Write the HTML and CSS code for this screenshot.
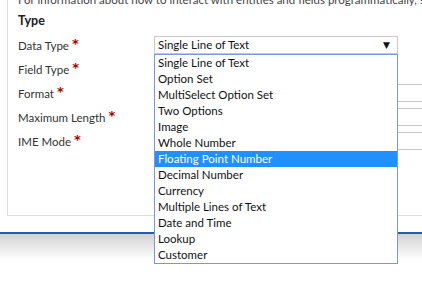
FILE: index.html
```html
<html lang="en">
<head>
    <meta charset="UTF-8">
    <title>Field properties</title>
    <link rel="stylesheet" href="styles.css">
</head>
<body>
    <div class="panel">
        <p class="intro">For information about how to interact with entities and fields programmatically, see</p>
        <h3>Type</h3>

        <div class="row">
            <label>Data Type <span class="req">*</span></label>
            <div class="field">
                <div class="select short">Single Line of Text<span class="arrow">&#9660;</span></div>
                <ul class="options">
                    <li>Single Line of Text</li>
                    <li>Option Set</li>
                    <li>MultiSelect Option Set</li>
                    <li>Two Options</li>
                    <li>Image</li>
                    <li>Whole Number</li>
                    <li class="selected">Floating Point Number</li>
                    <li>Decimal Number</li>
                    <li>Currency</li>
                    <li>Multiple Lines of Text</li>
                    <li>Date and Time</li>
                    <li>Lookup</li>
                    <li>Customer</li>
                </ul>
            </div>
        </div>
        <div class="row">
            <label>Field Type <span class="req">*</span></label>
            <div class="field"><div class="select short"></div></div>
        </div>
        <div class="row">
            <label>Format <span class="req">*</span></label>
            <div class="field"><div class="input"></div></div>
        </div>
        <div class="row">
            <label>Maximum Length <span class="req">*</span></label>
            <div class="field"><div class="input"></div></div>
        </div>
        <div class="row">
            <label>IME Mode <span class="req">*</span></label>
            <div class="field"><div class="input"></div></div>
        </div>
    </div>

    <div class="footer-bar"></div>
</body>
</html>
```

FILE: styles.css
```css
body {
    margin: 0;
    background: #fff;
    font-family: 'Lato', 'Noto Sans', sans-serif;
    font-size: 11.5px;
    color: #333;
    overflow: hidden;
}
.panel {
    margin-left: 7px;
    width: 600px;
    height: 225px;
    border-left: 1px solid #dcdcdc;
    border-bottom: 1px solid #dcdcdc;
    padding-left: 10px;
    box-sizing: border-box;
}
.intro {
    margin: 0;
    margin-top: -9px;
    height: 18px;
    line-height: 18px;
    color: #444;
    white-space: nowrap;
}
h3 {
    margin: 5px 0 0;
    height: 14px;
    line-height: 14px;
    font-size: 12.5px;
    font-weight: bold;
    color: #222;
}
.row {
    display: flex;
    align-items: center;
    height: 18px;
    margin-top: 6px;
}
.row:first-of-type {
    margin-top: 8px;
}
label {
    width: 136px;
    color: #333;
}
.req {
    color: #a80000;
    font-family: 'DejaVu Sans', sans-serif;
    font-size: 13px;
    font-weight: bold;
    position: relative;
    top: -2px;
}
.field {
    position: relative;
}
.select, .input {
    height: 18px;
    box-sizing: border-box;
    border: 1px solid #c8c8c8;
    background: #fff;
    padding-left: 3px;
    line-height: 16px;
    color: #111;
}
.select.short {
    width: 244px;
    position: relative;
}
.input {
    width: 400px;
}
.arrow {
    position: absolute;
    right: 7px;
    top: 0;
    font-family: 'DejaVu Sans', sans-serif;
    font-size: 9px;
    color: #111;
}
.options {
    position: absolute;
    top: 18px;
    left: 0;
    z-index: 2;
    width: 244px;
    box-sizing: border-box;
    margin: 0;
    padding: 0;
    list-style: none;
    border: 1px solid #7a98d8;
    background: #fff;
}
.options li {
    height: 16px;
    line-height: 16px;
    padding-left: 3px;
    color: #111;
    white-space: nowrap;
}
.options li.selected {
    background: #1e90ff;
    color: #fff;
}
.footer-bar {
    margin-top: 16px;
    height: 26px;
    border-top: 2px solid #1f5fae;
    background: linear-gradient(#d2d2d2, #fff);
}
```
